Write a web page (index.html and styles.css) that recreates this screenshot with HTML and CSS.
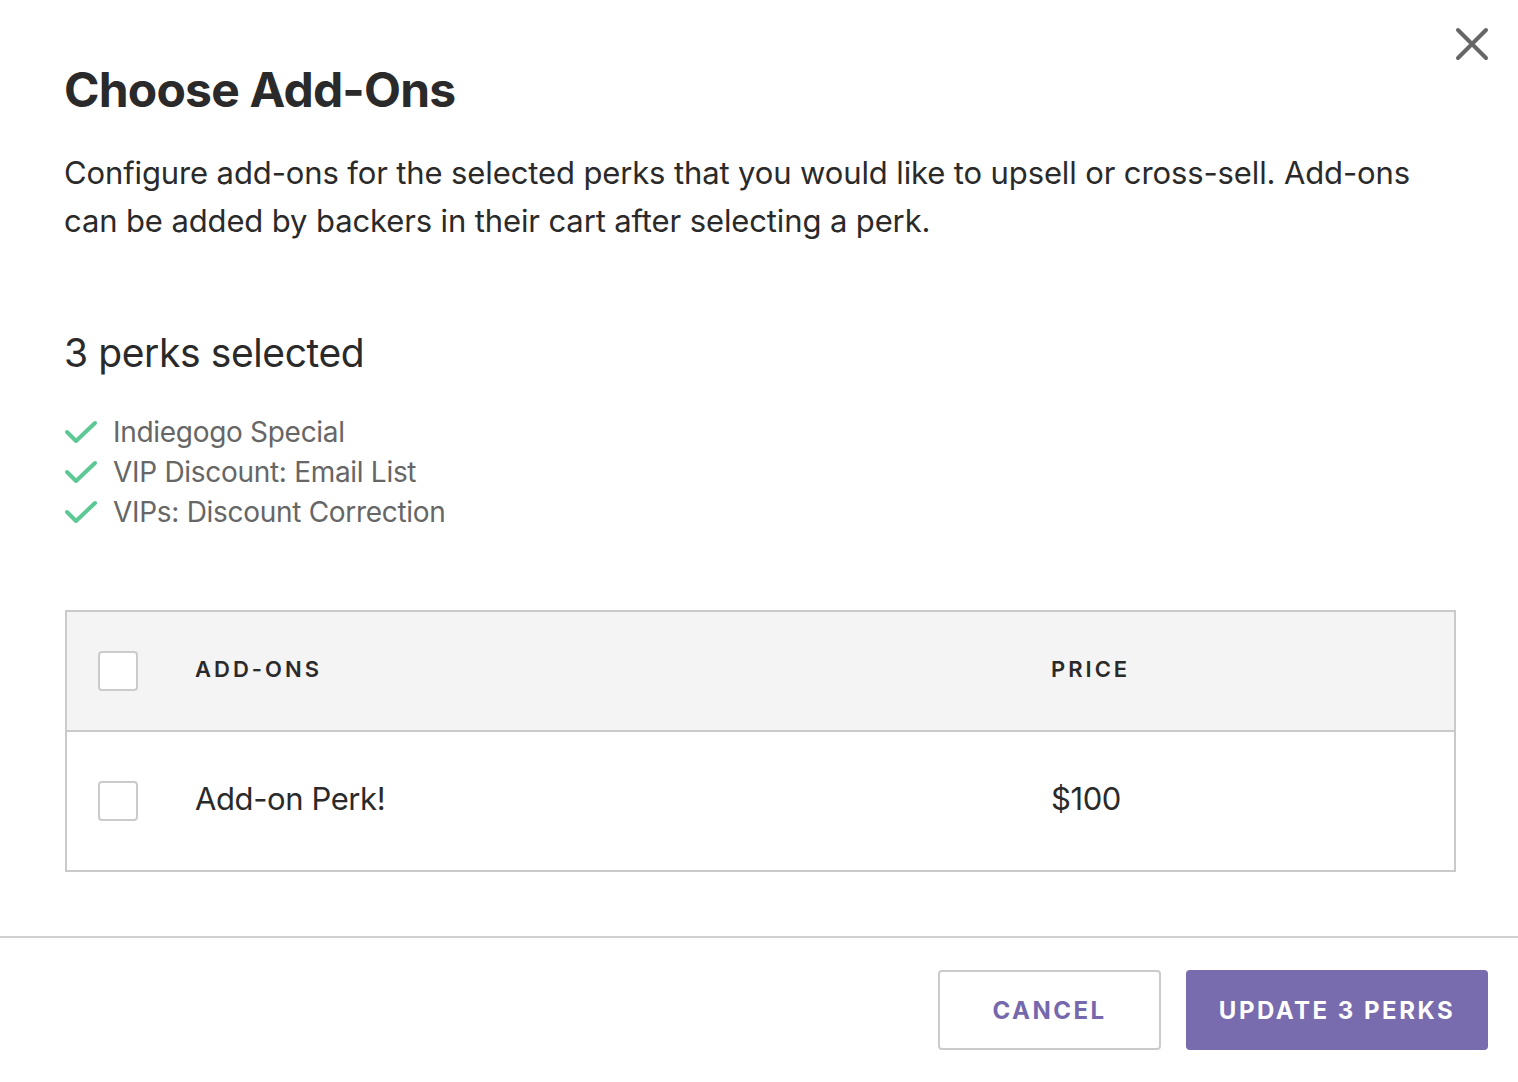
FILE: index.html
```html
<!DOCTYPE html>
<html>
<head>
<meta charset="utf-8">
<link rel="stylesheet" href="styles.css">
</head>
<body>
<div class="modal">
  <button class="close" aria-label="Close">
    <svg width="34" height="34" viewBox="0 0 34 34"><path d="M3 3L31 31M31 3L3 31" stroke="#666" stroke-width="4" stroke-linecap="round"/></svg>
  </button>
  <div class="content">
    <h1 class="title">Choose Add-Ons</h1>
    <p class="desc">Configure add-ons for the selected perks that you would like to upsell or cross-sell. Add-ons can be added by backers in their cart after selecting a perk.</p>
    <h2 class="subtitle">3 perks selected</h2>
    <ul class="perks">
      <li><svg class="check" width="34" height="26" viewBox="0 0 34 26"><path d="M3 13L12 22L31 4" fill="none" stroke="#5cc894" stroke-width="4" stroke-linecap="round" stroke-linejoin="round"/></svg>Indiegogo Special</li>
      <li><svg class="check" width="34" height="26" viewBox="0 0 34 26"><path d="M3 13L12 22L31 4" fill="none" stroke="#5cc894" stroke-width="4" stroke-linecap="round" stroke-linejoin="round"/></svg>VIP Discount: Email List</li>
      <li><svg class="check" width="34" height="26" viewBox="0 0 34 26"><path d="M3 13L12 22L31 4" fill="none" stroke="#5cc894" stroke-width="4" stroke-linecap="round" stroke-linejoin="round"/></svg>VIPs: Discount Correction</li>
    </ul>
    <div class="table">
      <div class="row head">
        <span class="box"></span>
        <span class="name">ADD-ONS</span>
        <span class="price">PRICE</span>
      </div>
      <div class="row item">
        <span class="box"></span>
        <span class="name">Add-on Perk!</span>
        <span class="price">$100</span>
      </div>
    </div>
  </div>
  <div class="footer">
    <button class="btn cancel">CANCEL</button>
    <button class="btn primary">UPDATE 3 PERKS</button>
  </div>
</div>
</body>
</html>
```

FILE: styles.css
```css
* { box-sizing: border-box; }
html, body { margin: 0; padding: 0; background: #fff; }
body { font-family: "Inter", "Liberation Sans", sans-serif; color: #2a2a2a; }
.modal { position: relative; width: 1518px; min-height: 1082px; }
.close { position: absolute; top: 27px; right: 29px; background: none; border: 0; padding: 0; width: 34px; height: 34px; cursor: pointer; }
.close svg { display: block; }
.content { padding: 58px 63px 0 64px; }
.title { margin: 0; font-size: 48px; font-weight: 700; line-height: 64px; letter-spacing: -0.8px; color: #2a2a2a; }
.desc { margin: 27px 0 0; font-size: 31px; line-height: 48px; color: #2a2a2a; letter-spacing: -0.12px; }
.subtitle { margin: 80px 0 0; font-size: 39px; font-weight: 400; line-height: 56px; letter-spacing: -0.4px; }
.perks { list-style: none; margin: 31px 0 0; padding: 0; }
.perks li { display: flex; align-items: center; font-size: 28px; line-height: 40px; color: #666; letter-spacing: -0.3px; }
.check { margin-right: 15px; flex: none; }
.table { margin-top: 78px; margin-left: 1px; width: 1391px; border: 2px solid #cacaca; }
.row { display: flex; align-items: center; padding-left: 31px; }
.row.head { height: 120px; background: #f4f4f4; border-bottom: 2px solid #cacaca; padding-bottom: 1px; }
.row.item { height: 138px; }
.box { width: 40px; height: 40px; border: 2px solid #cbcbcb; border-radius: 4px; background: #fff; flex: none; }
.name { margin-left: 57px; width: 856px; }
.head .name, .head .price { font-size: 22px; font-weight: 600; letter-spacing: 3px; color: #2a2a2a; margin-bottom: 4px; }
.item .name, .item .price { font-size: 31px; color: #2a2a2a; letter-spacing: -0.4px; margin-bottom: 6px; }
.footer { margin-top: 64px; border-top: 2px solid #cfcfcf; display: flex; justify-content: flex-end; gap: 25px; padding: 32px 30px 0 0; }
.btn { height: 80px; border-radius: 4px; font-family: inherit; font-size: 24px; font-weight: 700; letter-spacing: 2.5px; cursor: pointer; }
.cancel { width: 223px; background: #fff; border: 2px solid #cbcbcb; color: #7568ad; }
.primary { width: 302px; background: #786bae; border: 0; color: #fff; }
```
